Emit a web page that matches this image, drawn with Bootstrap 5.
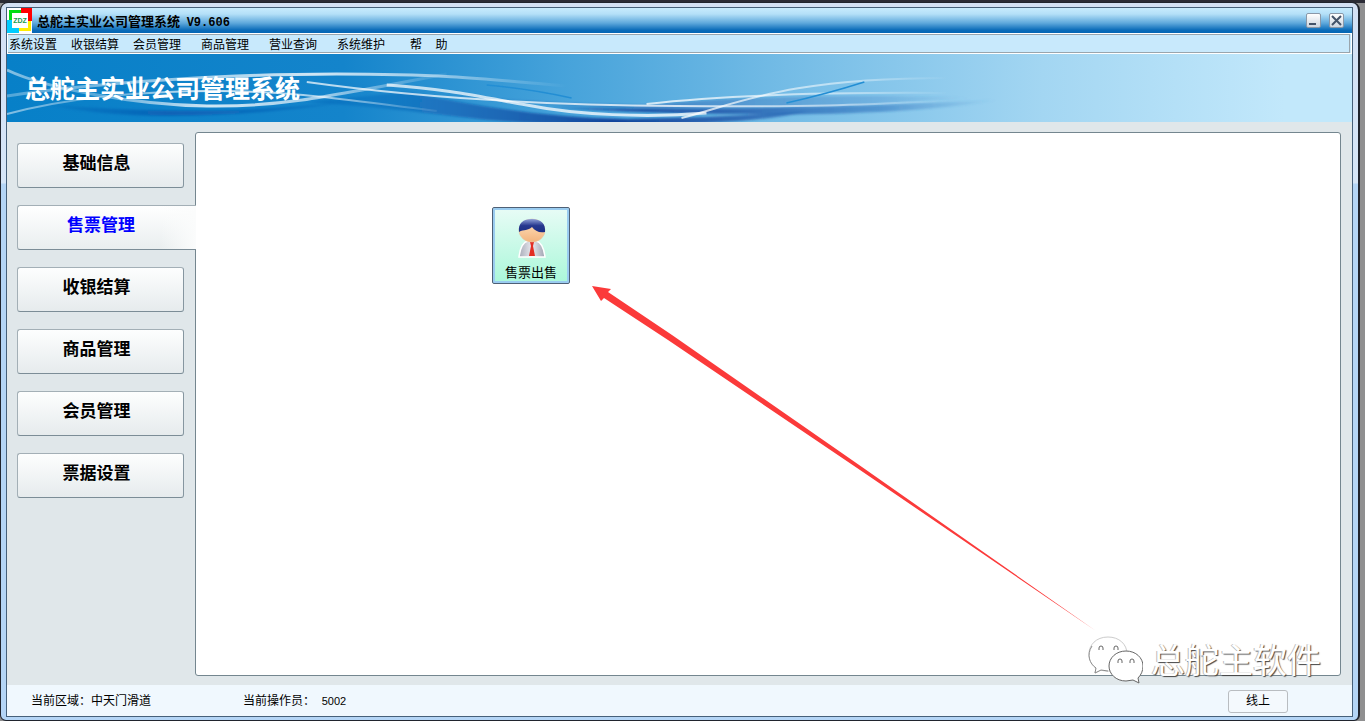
<!DOCTYPE html>
<html lang="zh-CN">
<head>
<meta charset="utf-8">
<meta name="viewport" content="width=device-width, initial-scale=1">
<title>总舵主实业公司管理系统 V9.606</title>
<link href="https://cdn.jsdelivr.net/npm/bootstrap@5.3.0/dist/css/bootstrap.min.css" rel="stylesheet">
<style>
  body { font: 12px/16px "Liberation Sans", "Noto Sans CJK SC", sans-serif; color: #000; background: #8f8f90; }
  .desktop { background: linear-gradient(#2b2b35 0 3px, transparent 3px); padding: 2px 5px 0 0; }
  .glass { border: 1px solid #20242e; border-width: 1px 2px 1px 1px; border-radius: 8px 8px 6px 6px; padding: 4px 5px 3px 5px; background: linear-gradient(#d3e0f4 0, #d6e6f8 180px, #b4d5f6 181px, #b4d5f6 100%); }
  .app { border: 1px solid #46607a; background: #e0e7ea; }
  .titlebar { height: 25px; background: linear-gradient(#c8ebfd 0, #b4e0f8 6px, #5fa9dc 15px, #0b6cb9 22px, #0566b4 100%); padding-right: 8px; }
  .titlebar h1 { font: 700 13px/16px "Liberation Sans", "Noto Sans CJK SC", sans-serif; padding: 3px 0 0 5px; }
  .titlebar .ver { font: 700 12px/16px "Liberation Mono", monospace; margin-left: 3px; }
  .sysbtn { width: 15px; height: 15px; padding: 0; border: 1px solid #8a98a8; border-radius: 2px; background: linear-gradient(#fff, #cdd6e0); line-height: 0; }
  .menubar { height: 21px; border: 1px solid #fff; background: #c8e9fc; }
  .menubar ul { border: 1px solid #9aa5ad; border-left: 0; height: 19px; padding-left: 1px; margin-right: 1px; }
  .menubar a { color: #000; text-decoration: none; display: block; white-space: pre; line-height: 20px; }
  .g1 { margin-right: 14px; } .g2 { margin-right: 20px; } .g3 { margin-right: 25px; }
  .banner { height: 68px; background: linear-gradient(90deg, #0780c8 0, #1484cb 25%, #45a2da 41%, #74bce6 58%, #a3d6f2 77%, #c2e8fb 95%); }
  .banner svg { position: absolute; inset: 0; width: 100%; height: 100%; }
  .banner h2 { font: 700 25px/32px "Liberation Serif", "Noto Sans CJK SC", sans-serif; color: #fff; padding: 20px 0 0 18px; }
  .side { width: 188px; padding: 21px 0 0 10px; gap: 17px; }
  .tabbtn { width: 167px; height: 45px; border: 1px solid #8b9aa3; border-color: #a3afb6 #8696a0 #7c8d97 #a3afb6; border-radius: 3px; background: linear-gradient(#fdfefe, #e6ebed); font-size: 17px; line-height: 24px; font-weight: 700; color: #000; padding: 0 8px 4px 0; }
  .tabbtn.on { width: 179px; border-right: 0; border-radius: 3px 0 0 3px; color: #00f; background: linear-gradient(90deg, transparent 80%, #fbfcfc), linear-gradient(#fff, #e9eeef); padding-right: 12px; z-index: 2; }
  .work { border: 1px solid #74868f; border-radius: 3px; background: #fff; margin: 10px 11px 9px 0; padding: 74px 0 0 296px; }
  .tile { width: 78px; height: 77px; border: 1px solid #4e6076; border-radius: 2px; box-shadow: inset 0 0 0 2px #9accf0; background: linear-gradient(#e8fcf6, #aaf7d9); padding: 9px 0 0; color: #000; font-size: 13px; line-height: 20px; }
  .arrow { position: absolute; left: 396px; top: 153px; pointer-events: none; }
  .wechat { position: absolute; right: 19px; bottom: -9px; pointer-events: none; }
  .wechat span { font: 34px/44px "Noto Sans CJK SC", sans-serif; color: #fff; text-shadow: -1px 0 0 #bbb, 1px 1px 1px #444; }
  .status { height: 31px; background: #f0f8fe; padding: 1px 64px 0 24px; }
  .status .area { width: 212px; }
  .status .num { font-size: 11px; }
  .online { width: 60px; height: 23px; border: 1px solid #b9bdc1; border-radius: 3px; background: #f4f9fd; color: #000; padding: 0; font-size: 12px; }
</style>
</head>
<body>
<div class="desktop vh-100 d-flex">
 <div class="glass flex-fill d-flex">
  <div class="app flex-fill d-flex flex-column">
   <header class="titlebar d-flex align-items-center">
    <svg width="25" height="25" viewBox="0 0 25 25" aria-hidden="true"><path fill="#fff" d="M0 0h25v25H0z"/><path fill="#0d1" d="M2 2h12v3H5v7H2z"/><path fill="#f00" d="M14 0h11v13h-4V5h-7z"/><path fill="#fe0" d="M21 13h3v10H12v-3h9z"/><path fill="#0cf" d="M0 12h5v8h7v5H0z"/><text x="13" y="15" text-anchor="middle" font-family="Liberation Sans" font-weight="700" font-size="7" fill="#169a4c">ZDZ</text></svg>
    <h1 class="m-0 flex-fill">总舵主实业公司管理系统 <span class="ver">V9.606</span></h1>
    <div class="d-flex gap-2">
     <button class="sysbtn" aria-label="最小化"><svg width="13" height="13"><path d="M2 10h7" stroke="#44546a" stroke-width="2"/></svg></button>
     <button class="sysbtn" aria-label="关闭"><svg width="13" height="13"><path d="M2 2l9 9M11 2l-9 9" stroke="#44546a" stroke-width="2"/></svg></button>
    </div>
   </header>
   <nav class="menubar">
    <ul class="list-unstyled d-flex mb-0">
     <li class="g1"><a href="#">系统设置</a></li><li class="g1"><a href="#">收银结算</a></li><li class="g2"><a href="#">会员管理</a></li><li class="g2"><a href="#">商品管理</a></li><li class="g2"><a href="#">营业查询</a></li><li class="g3"><a href="#">系统维护</a></li><li><a href="#">帮    助</a></li>
    </ul>
   </nav>
   <div class="banner position-relative overflow-hidden">
    <svg viewBox="0 0 1346 68" preserveAspectRatio="none" aria-hidden="true">
     <defs>
      <linearGradient id="fade" x1="0" x2="1346" y1="0" y2="0" gradientUnits="userSpaceOnUse"><stop offset="0" stop-color="#fff" stop-opacity=".35"/><stop offset=".2" stop-color="#fff" stop-opacity=".7"/><stop offset=".5" stop-color="#fff" stop-opacity=".75"/><stop offset=".62" stop-color="#fff" stop-opacity=".5"/><stop offset=".7" stop-color="#fff" stop-opacity="0"/></linearGradient>
      <linearGradient id="top" x1="0" x2="560" y1="0" y2="0" gradientUnits="userSpaceOnUse"><stop offset="0" stop-color="#fff" stop-opacity=".3"/><stop offset=".55" stop-color="#fff" stop-opacity=".8"/><stop offset=".75" stop-color="#fff" stop-opacity=".55"/><stop offset="1" stop-color="#fff" stop-opacity="0"/></linearGradient>
      <linearGradient id="low" x1="0" x2="450" y1="0" y2="0" gradientUnits="userSpaceOnUse"><stop offset="0" stop-color="#fff" stop-opacity=".5"/><stop offset=".2" stop-color="#fff" stop-opacity=".3"/><stop offset=".45" stop-color="#fff" stop-opacity=".8"/><stop offset=".7" stop-color="#fff" stop-opacity=".6"/><stop offset="1" stop-color="#fff" stop-opacity="0"/></linearGradient>
      <linearGradient id="deep" x1="0" x2="1346" y1="0" y2="0" gradientUnits="userSpaceOnUse"><stop offset="0" stop-color="#0a62b4" stop-opacity="0"/><stop offset=".12" stop-color="#0a58b0" stop-opacity=".75"/><stop offset=".27" stop-color="#0c68ba" stop-opacity=".4"/><stop offset=".45" stop-color="#103f98" stop-opacity=".95"/><stop offset=".65" stop-color="#2468b8" stop-opacity=".5"/><stop offset=".74" stop-color="#4a90cc" stop-opacity="0"/></linearGradient>
      <filter id="soft" x="-5%" y="-50%" width="110%" height="200%"><feGaussianBlur stdDeviation="2 1"/></filter>
      <filter id="thin" x="-5%" y="-50%" width="110%" height="200%"><feGaussianBlur stdDeviation=".6"/></filter>
     </defs>
     <g fill="url(#deep)" filter="url(#soft)">
      <path d="M40 50C120 58 230 60 340 48C240 64 110 68 40 50z"/>
      <path d="M400 38C470 52 540 64 620 65L700 63L800 58C740 70 660 72 560 70S440 58 300 48z"/>
      <path d="M540 53C680 58 820 54 990 46C880 66 680 62 540 53z"/>
      <path d="M310 26C420 40 520 52 660 55S880 48 960 44C860 40 740 42 640 51C520 50 420 40 310 26z" opacity=".4"/>
     </g>
     <g fill="none" filter="url(#thin)">
      <path d="M0 16C40 35 130 51 200 52S310 45 440 20" stroke="url(#low)" stroke-width="3"/>
      <path d="M0 42C90 28 230 20 330 20S470 24 560 32" stroke="url(#top)" stroke-width="3"/>
      <path d="M0 60C60 44 130 37 210 37S340 46 430 57" stroke="url(#low)" stroke-width="2"/>
      <g stroke="url(#fade)">
       <path d="M300 28C400 42 520 51 670 52S850 51 960 46" stroke-width="2"/>
       <path d="M380 31C440 35 470 42 520 51C570 61 640 64 700 59" stroke-width="3"/>
       <path d="M675 64C730 50 780 24 940 24" stroke-width="2"/>
       <path d="M640 50C710 42 800 38 940 39" stroke-width="2"/>
      </g>
     </g>
     <path d="M480 31Q525 35 565 44M780 49Q820 40 858 28" fill="none" stroke="#238ed4" stroke-width="1.500" filter="url(#thin)"/>
    </svg>
    <h2 class="m-0 position-relative">总舵主实业公司管理系统</h2>
   </div>
   <main class="flex-fill d-flex">
    <nav class="side d-flex flex-column flex-shrink-0">
     <button class="tabbtn">基础信息</button>
     <button class="tabbtn on position-relative" aria-current="page">售票管理</button>
     <button class="tabbtn">收银结算</button>
     <button class="tabbtn">商品管理</button>
     <button class="tabbtn">会员管理</button>
     <button class="tabbtn">票据设置</button>
    </nav>
    <section class="work flex-fill position-relative">
     <button class="tile d-flex flex-column align-items-center">
      <svg width="32" height="42" viewBox="0 0 32 42" aria-hidden="true">
       <defs><linearGradient id="skin" x2="0" y2="1"><stop stop-color="#ffe4c0"/><stop offset="1" stop-color="#f3b47e"/></linearGradient><linearGradient id="hair" x2="0" y2="1"><stop stop-color="#8fa0d8"/><stop offset=".5" stop-color="#26388f"/><stop offset="1" stop-color="#1c2f85"/></linearGradient><linearGradient id="suit" x2="1"><stop stop-color="#a9abb8"/><stop offset=".5" stop-color="#e9eaf0"/><stop offset="1" stop-color="#9fa2b0"/></linearGradient></defs>
       <path d="M4 40C5 32 8 25 13 24h8c5 1 8 8 9 16z" fill="url(#suit)" stroke="#fff" stroke-width="1.500"/>
       <path d="M15 25h4l-1 4 2 10h-6l2-10z" fill="#e32d24"/>
       <ellipse cx="17" cy="13.500" rx="13" ry="11.500" fill="url(#skin)" stroke="#e7c3a0" stroke-width=".5"/>
       <path d="M4 15C3 6 8 2 17 2s14 5 13 13c-6 1-10-1-13-5-4 4-8 2-13 5z" fill="url(#hair)"/>
      </svg>
      <span class="mt-1">售票出售</span>
     </button>
     <svg class="arrow" width="505" height="346" viewBox="0 0 505 346" aria-hidden="true"><path fill="#fb3a3a" d="M0 0L19 3L16 6L80 49L270 181L504 345L268 184L76 54L12 12L9 15z"/></svg>
     <div class="wechat d-flex align-items-center gap-2">
      <svg width="56" height="50" viewBox="0 0 56 50" fill="#fff" stroke="#8a8a8a" aria-hidden="true"><path stroke="#ccc" d="M21 3C9 3 2 11 2 20c0 7 3 11 7 14l-1 5 6-3c12 4 26-3 26-16C40 10 32 3 21 3z"/><path d="M5 12C-1 21 3 30 9 34l-1 5 6-3 7 1"/><path stroke="#666" d="M39 17c-10 0-17 7-17 15s7 15 17 15l7-1 6 3-1-5c3-3 5-7 5-12 0-8-7-15-17-15z"/><path fill="none" stroke="#666" d="M12 16v-2a2 2 0 0 1 4 0v2M27 16v-2a2 2 0 0 1 4 0v2M31 29v-2a2 2 0 0 1 4 0v2M43 29v-2a2 2 0 0 1 4 0v2"/></svg>
      <span>总舵主软件</span>
     </div>
    </section>
   </main>
   <footer class="status d-flex align-items-center">
    <span class="area">当前区域：中天门滑道</span>
    <span class="flex-fill">当前操作员：&nbsp; <span class="num">5002</span></span>
    <button class="online">线上</button>
   </footer>
  </div>
 </div>
</div>
<script src="https://cdn.jsdelivr.net/npm/bootstrap@5.3.0/dist/js/bootstrap.bundle.min.js"></script>
</body>
</html>
